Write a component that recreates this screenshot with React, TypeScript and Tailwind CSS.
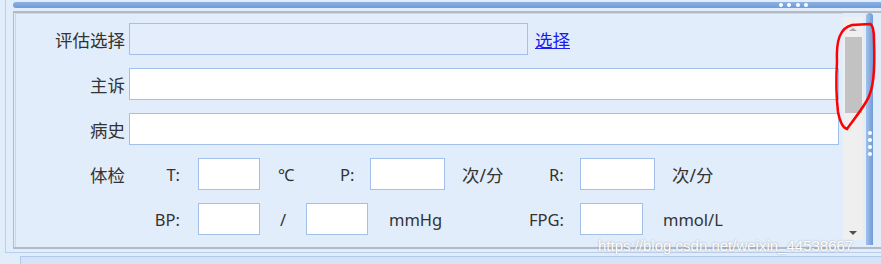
import React from 'react'

const Box = ({ w, bg = 'bg-white' }: { w: string; bg?: string }) => (
  <input type="text" readOnly className={`${w} ${bg} h-[32px] border border-[#a2c0ea] outline-none`} />
)

const Dot = () => <span className="block w-[4px] h-[4px] rounded-full bg-white" />

// text sits a little below the middle of the row, like the WinForms original
const T = ({ className, children }: { className?: string; children?: React.ReactNode }) => (
  <span className={`pt-[3px] ${className ?? ''}`}>{children}</span>
)

const App = () => {
  return (
    <div className="relative w-[881px] h-[264px] overflow-hidden bg-[#e2edfb] font-['Noto_Sans','Noto_Sans_CJK_SC',sans-serif] text-[#333]">
      <div className="ml-[5px] h-[253px] border-l border-b border-[#b7cef0] flex flex-col">
        {/* title bar */}
        <div className="ml-[7px] mt-[2px] h-[6px] rounded-l-full bg-gradient-to-b from-[#8cb1e3] to-[#6f9bd7] flex items-center justify-end pr-[73px] gap-[4.5px]">
          <Dot /><Dot /><Dot /><Dot />
        </div>

        {/* panel */}
        <div className="ml-[7px] mt-[3px] mb-[3px] flex-1 flex border-t-2 border-l border-b-2 border-[#b3bac6]">
          <div className="ml-[1px] flex-1 border-l border-t border-[#c6d9f4] pt-[9px] flex flex-col gap-[13px] text-[17.5px]">
            <div className="flex items-center h-[32px]">
              <T className="w-[109px] text-right">评估选择</T>
              <span className="ml-[4px]"><Box w="w-[399px]" bg="bg-[#e3edfb]" /></span>
              <a className="ml-[7px] pt-[3px] text-[#1b1bef] underline cursor-pointer">选择</a>
            </div>
            <div className="flex items-center h-[32px]">
              <T className="w-[109px] text-right">主诉</T>
              <span className="ml-[4px]"><Box w="w-[710px]" /></span>
            </div>
            <div className="flex items-center h-[32px]">
              <T className="w-[109px] text-right">病史</T>
              <span className="ml-[4px]"><Box w="w-[710px]" /></span>
            </div>
            <div className="flex items-center h-[32px] text-[16.5px]">
              <T className="w-[109px] text-right text-[17.5px]">体检</T>
              <T className="w-[55px] text-right">T:</T>
              <span className="ml-[18px]"><Box w="w-[62px]" /></span>
              <T className="w-[80px] pl-[18px]">℃</T>
              <T className="w-[30px]">P:</T>
              <Box w="w-[75px]" />
              <T className="w-[104px] pl-[17px] text-[17.5px]">次/分</T>
              <T className="w-[31px]">R:</T>
              <Box w="w-[75px]" />
              <T className="pl-[17px] text-[17.5px]">次/分</T>
            </div>
            <div className="flex items-center h-[32px] text-[16.5px]">
              <span className="w-[109px]" />
              <T className="w-[55px] text-right">BP:</T>
              <span className="ml-[18px]"><Box w="w-[62px]" /></span>
              <T className="w-[46px] pl-[20px]">/</T>
              <Box w="w-[62px]" />
              <T className="w-[161px] pl-[21px]">mmHg</T>
              <T className="w-[51px]">FPG:</T>
              <Box w="w-[63px]" />
              <T className="pl-[20px]">mmol/L</T>
            </div>
          </div>

          {/* scrollbar */}
          <div className="mt-[4px] h-[223px] w-[20px] bg-[#efefef] flex flex-col items-center">
            <span className="mt-[11px] w-0 h-0 border-l-[4px] border-r-[4px] border-b-[3px] border-l-transparent border-r-transparent border-b-[#a6a6a6]" />
            <span className="mt-[6px] w-[17px] h-[76px] bg-[#c2c2c2]" />
            <span className="mt-auto mb-[5px] w-0 h-0 border-l-[4.5px] border-r-[4.5px] border-t-[4px] border-l-transparent border-r-transparent border-t-[#505050]" />
          </div>

          {/* side splitter */}
          <div className="ml-[3px] h-[232px] w-[7px] rounded-t-full bg-gradient-to-r from-[#a3c2ea] to-[#6f9bd7] flex flex-col items-center justify-center gap-[3px] pt-[28px]">
            <Dot /><Dot /><Dot /><Dot />
          </div>
          <div className="w-[8px]" />
        </div>
      </div>

      <div className="ml-[20px] mt-[3px] h-[10px] border-l border-t border-[#b3c9ea] bg-[#d5e3f6]" />

      {/* watermark */}
      <span className="absolute left-[598px] top-[235px] text-[15px] font-['Liberation_Sans',sans-serif] text-white [text-shadow:0_0_2px_rgba(60,60,60,0.45)]">
        https://blog.csdn.net/weixin_44538667
      </span>

      {/* red annotation */}
      <svg className="absolute left-0 top-0" width="881" height="264" fill="none">
        <path
          d="M837 62 C836 40 840 28 852 25 L870 24 C873 25 874 30 874 40 C875 70 874 90 866 102 C860 112 852 122 847 129 C843 128 840 122 838 112 C836 95 836 78 837 62 Z"
          stroke="#ff0000"
          strokeWidth="2.5"
        />
      </svg>
    </div>
  )
}

export default App
